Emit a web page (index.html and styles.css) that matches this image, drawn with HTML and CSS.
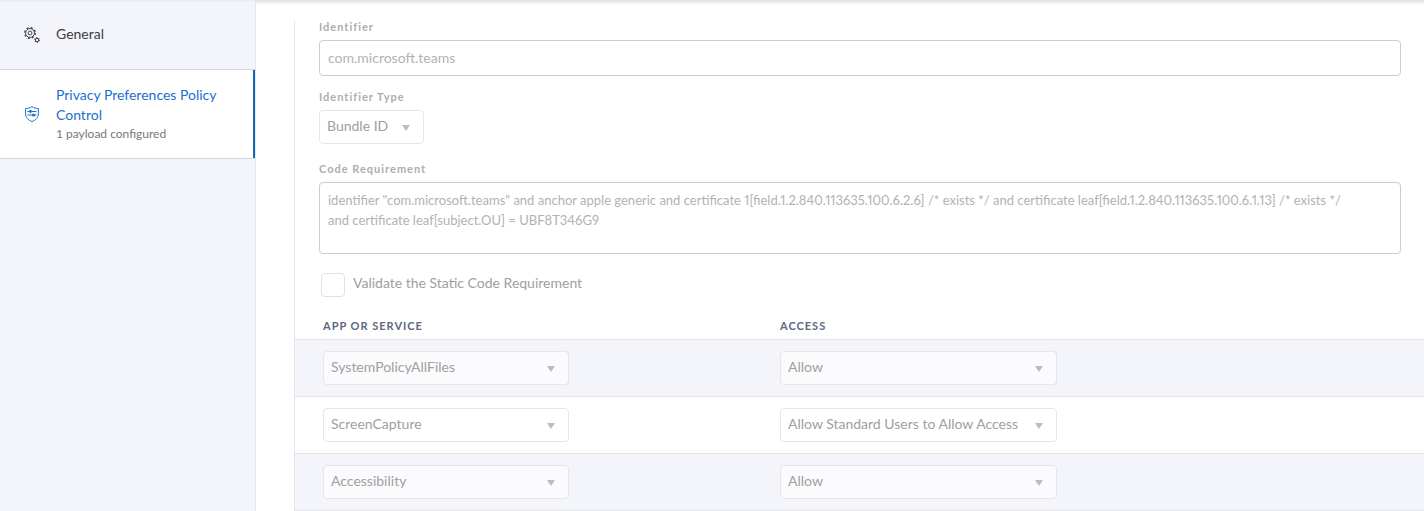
FILE: index.html
```html
<!DOCTYPE html>
<html lang="en">
<head>
    <meta charset="UTF-8">
    <meta name="viewport" content="width=device-width, initial-scale=1.0">
    <title>Privacy Preferences Policy Control</title>
    <link rel="stylesheet" href="styles.css">
</head>
<body>
    <div class="layout">
        <nav class="sidebar">
            <a class="payload" href="#general">
                <svg class="payload-icon" viewBox="0 0 16 16" fill="none" stroke="currentColor">
                    <circle cx="6" cy="6" r="4.4" stroke-width=".9"/>
                    <circle cx="6" cy="6" r="5.3" stroke-width="1.3" stroke-dasharray="2.1 2.06"/>
                    <circle cx="6" cy="6" r="1.9" stroke-width=".9"/>
                    <circle cx="13" cy="13" r="1.7"/>
                    <circle cx="13" cy="13" r="2.5" stroke-width=".9" stroke-dasharray="1.3 1.32"/>
                </svg>
                <span class="payload-text">
                    <span class="payload-name">General</span>
                </span>
            </a>
            <a class="payload active" href="#pppc">
                <svg class="payload-icon" viewBox="0 0 16 16" fill="none" stroke="currentColor">
                    <path d="M8 .6C6.2 1.9 4 2.5 1.6 2.5v5.3c0 3.9 2.5 6.2 6.4 7.7 3.9-1.5 6.4-3.8 6.4-7.7V2.5C12 2.5 9.8 1.9 8 .6z"/>
                    <path d="M3.5 5.5h9M3.5 9h9"/>
                    <circle cx="6.5" cy="5.5" r="1.4" fill="currentColor" stroke="none"/>
                    <circle cx="9.5" cy="9" r="1.5" fill="currentColor" stroke="none"/>
                </svg>
                <span class="payload-text">
                    <span class="payload-name">Privacy Preferences Policy Control</span>
                    <span class="payload-info">1 payload configured</span>
                </span>
            </a>
        </nav>

        <main class="content">
            <form class="panel">
                <div class="fields">
                    <div class="field">
                        <label for="identifier">Identifier</label>
                        <input class="text-box" type="text" id="identifier" value="com.microsoft.teams" disabled>
                    </div>
                    <div class="field field-type">
                        <label for="identifier-type">Identifier Type</label>
                        <div class="select select-type">
                            <select id="identifier-type" disabled>
                                <option>Bundle ID</option>
                            </select>
                        </div>
                    </div>
                    <div class="field">
                        <label for="code-requirement">Code Requirement</label>
                        <textarea class="text-box" id="code-requirement" disabled>identifier "com.microsoft.teams" and anchor apple generic and certificate 1[field.1.2.840.113635.100.6.2.6] /* exists */ and certificate leaf[field.1.2.840.113635.100.6.1.13] /* exists */
and certificate leaf[subject.OU] = UBF8T346G9</textarea>
                    </div>
                    <div class="check">
                        <input type="checkbox" id="validate" disabled>
                        <label for="validate">Validate the Static Code Requirement</label>
                    </div>
                </div>

                <table class="services">
                    <thead>
                        <tr>
                            <th class="col-service">App or Service</th>
                            <th>Access</th>
                        </tr>
                    </thead>
                    <tbody>
                        <tr>
                            <td>
                                <div class="select select-service">
                                    <select aria-label="App or Service" disabled><option>SystemPolicyAllFiles</option></select>
                                </div>
                            </td>
                            <td>
                                <div class="select select-access">
                                    <select aria-label="Access" disabled><option>Allow</option></select>
                                </div>
                            </td>
                        </tr>
                        <tr>
                            <td>
                                <div class="select select-service">
                                    <select aria-label="App or Service" disabled><option>ScreenCapture</option></select>
                                </div>
                            </td>
                            <td>
                                <div class="select select-access">
                                    <select aria-label="Access" disabled><option>Allow Standard Users to Allow Access</option></select>
                                </div>
                            </td>
                        </tr>
                        <tr>
                            <td>
                                <div class="select select-service">
                                    <select aria-label="App or Service" disabled><option>Accessibility</option></select>
                                </div>
                            </td>
                            <td>
                                <div class="select select-access">
                                    <select aria-label="Access" disabled><option>Allow</option></select>
                                </div>
                            </td>
                        </tr>
                    </tbody>
                </table>
            </form>
        </main>
    </div>
</body>
</html>
```
FILE: styles.css
```css
* {
    box-sizing: border-box;
}
body {
    margin: 0;
    font-family: Lato, sans-serif;
    font-size: 14px;
    line-height: 20px;
    color: #333;
    background-color: #fff;
}
.layout {
    display: flex;
    min-height: 100vh;
}

/* sidebar */
.sidebar {
    flex: 0 0 256px;
    background: linear-gradient(#e6e7ea, #f4f5fa 2px);
    border-right: 1px solid #e4e6ea;
}
.payload {
    display: flex;
    align-items: center;
    gap: 16px;
    min-height: 70px;
    padding: 0 24px;
    border-bottom: 1px solid #d3d5d9;
    color: #3c3c40;
    text-decoration: none;
}
.payload.active {
    padding: 15px 24px;
    background-color: #fff;
    color: #1b6fce;
    box-shadow: inset -2px 0 #0f69b4;
}
.payload-icon {
    flex: none;
    width: 16px;
    height: 16px;
}
.payload-text {
    padding-bottom: 2px;
}
.active .payload-text {
    padding-bottom: 0;
}
.payload-name,
.payload-info {
    display: block;
}
.payload-info {
    font-size: 12px;
    line-height: 18px;
    color: #777;
}

/* form */
.content {
    flex: 1;
    min-width: 0;
    padding: 20px 0 0 38px;
    background: linear-gradient(#e2e2e2, #fff 5px);
}
.panel {
    border-left: 1px solid #e4e6ea;
}
.fields {
    padding: 0 23px 0 24px;
}
.field {
    margin-bottom: 14px;
}
.field-type {
    margin-bottom: 18px;
}
.field label {
    display: block;
    margin-bottom: 6px;
    font-size: 11px;
    line-height: 14px;
    font-weight: bold;
    letter-spacing: 1px;
    color: #adadad;
}
.text-box {
    display: block;
    width: 100%;
    height: 36px;
    padding: 0 8px 2px;
    border: 1px solid #ccc;
    border-radius: 4px;
    background-color: #fff;
    font: inherit;
    font-variant-numeric: proportional-nums;
    color: #b2b2b2;
}
textarea.text-box {
    height: 72px;
    padding: 7px 8px;
    font-size: 13px;
    resize: none;
}
.select {
    position: relative;
}
.select::after {
    content: "";
    position: absolute;
    top: 15px;
    right: 14px;
    border: solid transparent;
    border-width: 6px 4px 0;
    border-top-color: #bbbcc0;
}
.select select {
    display: block;
    width: 100%;
    height: 34px;
    padding: 0 7px 2px;
    border: 1px solid #e5e6ea;
    border-radius: 4px;
    background-color: rgba(255, 255, 255, 0.6);
    font: inherit;
    color: #a0a0a0;
    opacity: 1;
    appearance: none;
}
.select-type {
    width: 105px;
}
.select-service {
    width: 246px;
}
.select-access {
    width: 277px;
}
.check {
    display: flex;
    align-items: center;
    gap: 8px;
    padding: 5px 2px 0;
    color: #a0a0a0;
}
.check input {
    width: 24px;
    height: 24px;
    margin: 0;
    border: 1px solid #e0e1e4;
    border-radius: 4px;
    background-color: #fff;
    appearance: none;
}
.check label {
    padding-bottom: 4px;
}

/* services table */
.services {
    width: 100%;
    margin-top: 18px;
    border-collapse: collapse;
    table-layout: fixed;
}
.services th {
    height: 24px;
    padding: 0 28px 2px;
    font-size: 11px;
    line-height: 22px;
    text-align: left;
    text-transform: uppercase;
    letter-spacing: 1px;
    color: #5a6880;
}
.services .col-service {
    width: 457px;
}
.services td {
    height: 57px;
    padding: 11px 28px;
    border-top: 1px solid #e4e6ea;
    border-bottom: 1px solid #e4e6ea;
}
.services tbody tr:nth-child(odd) {
    background-color: #f4f5fa;
}
```
